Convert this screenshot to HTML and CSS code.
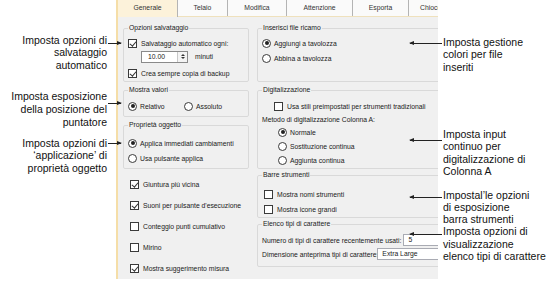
FILE: index.html
```html
<!DOCTYPE html>
<html lang="it">
<head>
<meta charset="utf-8">
<title>Opzioni - Generale</title>
<link rel="stylesheet" href="styles.css">
</head>
<body>
<div class="page">
  <div class="notes notes-left">
    <p class="note nl1">Imposta opzioni di<br>salvataggio<br>automatico<span class="arrow arrow-r"></span></p>
    <p class="note nl2">Imposta esposizione<br>della posizione del<br>puntatore<span class="arrow arrow-r"></span></p>
    <p class="note nl3">Imposta opzioni di<br>‘applicazione’ di<br>proprietà oggetto<span class="arrow arrow-r"></span></p>
  </div>

  <div class="dialog">
    <div class="tabs">
      <div class="tab active t-gen">Generale</div>
      <div class="tab t-tel">Telaio</div>
      <div class="tab t-mod">Modifica</div>
      <div class="tab t-att">Attenzione</div>
      <div class="tab t-esp">Esporta</div>
      <div class="tab t-chi">Chiocciola</div>
    </div>
    <div class="panel">
      <div class="col col-l">
        <fieldset class="grp g1">
          <legend>Opzioni salvataggio</legend>
          <div class="row"><span class="cb on"></span>Salvataggio automatico ogni:</div>
          <div class="row spin-row">
            <span class="spin"><span class="spin-val">10.00</span><span class="spin-btn"><span class="up"></span><span class="dn"></span></span></span>
            <span class="unit">minuti</span>
          </div>
          <div class="row r-crea"><span class="cb on"></span>Crea sempre copia di backup</div>
        </fieldset>

        <fieldset class="grp g2">
          <legend>Mostra valori</legend>
          <div class="row">
            <span class="opt"><span class="rb on"></span>Relativo</span>
            <span class="opt"><span class="rb"></span>Assoluto</span>
          </div>
        </fieldset>

        <fieldset class="grp g3">
          <legend>Proprietà oggetto</legend>
          <div class="row"><span class="rb on"></span>Applica immediati cambiamenti</div>
          <div class="row r-gap"><span class="rb"></span>Usa pulsante applica</div>
        </fieldset>

        <div class="checks">
          <div class="row"><span class="cb on"></span>Giuntura più vicina</div>
          <div class="row"><span class="cb on"></span>Suoni per pulsante d'esecuzione</div>
          <div class="row"><span class="cb"></span>Conteggio punti cumulativo</div>
          <div class="row"><span class="cb"></span>Mirino</div>
          <div class="row"><span class="cb on"></span>Mostra suggerimento misura</div>
        </div>
      </div>

      <div class="col col-r">
        <fieldset class="grp ga">
          <legend>Inserisci file ricamo</legend>
          <div class="row"><span class="rb on"></span>Aggiungi a tavolozza</div>
          <div class="row r-gap"><span class="rb"></span>Abbina a tavolozza</div>
        </fieldset>

        <fieldset class="grp gb">
          <legend>Digitalizzazione</legend>
          <div class="row ind-cb"><span class="cb"></span>Usa stili preimpostati per strumenti tradizionali</div>
          <div class="row r-label">Metodo di digitalizzazione Colonna A:</div>
          <div class="row ind-rb"><span class="rb on"></span>Normale</div>
          <div class="row ind-rb"><span class="rb"></span>Sostituzione continua</div>
          <div class="row ind-rb"><span class="rb"></span>Aggiunta continua</div>
        </fieldset>

        <fieldset class="grp gc">
          <legend>Barre strumenti</legend>
          <div class="row ind-sm"><span class="cb"></span>Mostra nomi strumenti</div>
          <div class="row ind-sm r-gap"><span class="cb"></span>Mostra icone grandi</div>
        </fieldset>

        <fieldset class="grp gd">
          <legend>Elenco tipi di carattere</legend>
          <div class="row">Numero di tipi di carattere recentemente usati:<span class="field f-num">5</span></div>
          <div class="row">Dimensione anteprima tipi di carattere:<span class="field f-size">Extra Large</span></div>
        </fieldset>
      </div>
    </div>
  </div>

  <div class="notes notes-right">
    <p class="note nra">Imposta gestione<br>colori per file<br>inseriti<span class="arrow arrow-l"></span></p>
    <p class="note nrb">Imposta input<br>continuo per<br>digitalizzazione di<br>Colonna A<span class="arrow arrow-l"></span></p>
    <p class="note nrc">Impostal’le opzioni<br>di esposizione<br>barra strumenti<span class="arrow arrow-l"></span></p>
    <p class="note nrd">Imposta opzioni di<br>visualizzazione<br>elenco tipi di carattere<span class="arrow arrow-l"></span></p>
  </div>
</div>
</body>
</html>
```
FILE: styles.css
```css
* { box-sizing: border-box; }

body {
  margin: 0;
  background: #ffffff;
}

.page {
  display: flex;
  width: 552px;
  height: 284px;
  overflow: hidden;
  font-family: "Liberation Sans", Arial, sans-serif;
}

/* ---------- callout notes ---------- */
.notes {
  font-size: 10.5px;
  line-height: 12.6px;
  color: #111;
  position: relative;
  z-index: 2;
}
.notes-left {
  width: 116px;
  flex: none;
  text-align: right;
  padding-right: 9px;
}
.notes-right {
  flex: 1;
  padding-left: 5px;
  white-space: nowrap;
}
.note {
  margin: 0;
  position: relative;
}
.nl1 { margin-top: 33.7px; }
.nl2 { margin-top: 18.9px; }
.nl3 { margin-top: 8.5px; }
.nra { margin-top: 35.7px; }
.nrb { margin-top: 54.2px; }
.nrc { margin-top: 11px; line-height: 12px; }
.nrd { margin-top: 0; }

.arrow {
  position: absolute;
  height: 1px;
  background: #222;
}
.arrow-r {
  left: calc(100% + 1px);
  width: 13px;
}
.arrow-r::after {
  content: "";
  position: absolute;
  right: -1px;
  top: -2px;
  border-left: 5px solid #222;
  border-top: 2.5px solid transparent;
  border-bottom: 2.5px solid transparent;
}
.arrow-l {
  left: -33px;
  width: 32px;
}
.arrow-l::after {
  content: "";
  position: absolute;
  left: -1px;
  top: -2px;
  border-right: 5px solid #222;
  border-top: 2.5px solid transparent;
  border-bottom: 2.5px solid transparent;
}
.nl1 .arrow { top: 9px; }
.nl2 .arrow { top: 13px; }
.nl3 .arrow { top: 6px; }
.nra .arrow { top: 7px; }
.nrb .arrow { top: 12px; }
.nrc .arrow { top: 8px; }
.nrd .arrow { top: 9px; }

/* ---------- dialog ---------- */
.dialog {
  width: 322px;
  flex: none;
  height: 279px;
  background: #f0f0f0;
  border-left: 2px solid #f5dea8;
  font-size: 6.8px;
  color: #1a1a1a;
  display: flex;
  flex-direction: column;
  overflow: hidden;
}

.tabs {
  display: flex;
  height: 17px;
  flex: none;
  background: #fafafa;
  border-bottom: 1px solid #efe1bd;
}
.tab {
  height: 16px;
  line-height: 16px;
  text-align: center;
  border-right: 1px solid #b4b4b4;
  color: #333;
  flex: none;
  white-space: nowrap;
  overflow: hidden;
}
.tab.active {
  background: #fcf2da;
  height: 17px;
  margin-bottom: -1px;
}
.t-gen { width: 60px; }
.t-tel { width: 50px; }
.t-mod { width: 59px; }
.t-att { width: 66px; }
.t-esp { width: 56px; }
.t-chi { flex: 1; text-align: left; padding-left: 11px; border-right: 0; }

.panel {
  display: flex;
  gap: 8px;
  padding: 6px 0 0 5px;
}
.col { flex: none; }
.col-l { width: 126px; }
.col-r { width: 200px; }

.grp {
  margin: 0;
  padding: 3px 4px 1px;
  border: 1px solid #d9d9d9;
  border-radius: 2px;
  min-width: 0;
}
.grp legend {
  padding: 0 1px;
  height: 10px;
  line-height: 10px;
  color: #222;
}

.row {
  display: flex;
  align-items: center;
  height: 14px;
  white-space: nowrap;
}
.r-gap { margin-top: 1px; }

/* checkbox */
.cb {
  width: 9px;
  height: 9px;
  border: 1px solid #3a3a3a;
  background: #fff;
  margin-right: 4px;
  flex: none;
  position: relative;
}
.cb.on::after {
  content: "";
  position: absolute;
  left: 2.3px;
  top: 0.3px;
  width: 2.6px;
  height: 5px;
  border-right: 1px solid #333;
  border-bottom: 1px solid #333;
  transform: rotate(40deg);
}

/* radio */
.rb {
  width: 9px;
  height: 9px;
  border: 1px solid #3a3a3a;
  border-radius: 50%;
  background: #fff;
  margin-right: 3px;
  flex: none;
  position: relative;
}
.rb.on::after {
  content: "";
  position: absolute;
  left: 1.5px;
  top: 1.5px;
  width: 4px;
  height: 4px;
  border-radius: 50%;
  background: #222;
}

/* group 1 */
.spin-row { height: 13px; }
.spin {
  display: flex;
  margin-left: 13px;
  width: 47px;
  height: 12px;
  border: 1px solid #8a8a8a;
  background: #fff;
}
.spin-val {
  flex: 1;
  padding-left: 6px;
  line-height: 10px;
}
.spin-btn {
  width: 10px;
  border-left: 1px solid #c8c8c8;
  background: #f4f4f4;
  display: flex;
  flex-direction: column;
  align-items: center;
  justify-content: center;
  gap: 1px;
}
.spin-btn .up {
  border-bottom: 2.5px solid #333;
  border-left: 2.5px solid transparent;
  border-right: 2.5px solid transparent;
}
.spin-btn .dn {
  border-top: 2.5px solid #333;
  border-left: 2.5px solid transparent;
  border-right: 2.5px solid transparent;
}
.unit { margin-left: 7px; }
.r-crea { margin-top: 3px; }

.g2 { margin-top: 3px; padding-top: 4px; padding-bottom: 3px; }
.opt { display: flex; align-items: center; width: 56px; }

.g3 { margin-top: 3px; padding-top: 6px; padding-bottom: 3px; }

.checks {
  margin-top: 8px;
  padding-left: 7px;
  display: flex;
  flex-direction: column;
  gap: 7px;
}

/* right column */
.ga { padding-bottom: 16px; }
.gb { margin-top: 3px; padding-top: 4px; padding-bottom: 1px; }
.ind-cb { padding-left: 12px; }
.ind-rb { padding-left: 16px; }
.r-label { height: 12px; }
.gc { margin-top: 1px; padding-top: 7px; padding-bottom: 1px; }
.ind-sm { padding-left: 2px; }
.gd { margin-top: 1px; padding-top: 4px; padding-bottom: 5px; }

.field {
  display: inline-block;
  height: 12px;
  line-height: 10px;
  border: 1px solid #a9abb3;
  background: #fff;
  padding-left: 4px;
}
.f-num { width: 38px; margin-left: 2px; }
.f-size { width: 80px; margin-left: -1px; }
```
